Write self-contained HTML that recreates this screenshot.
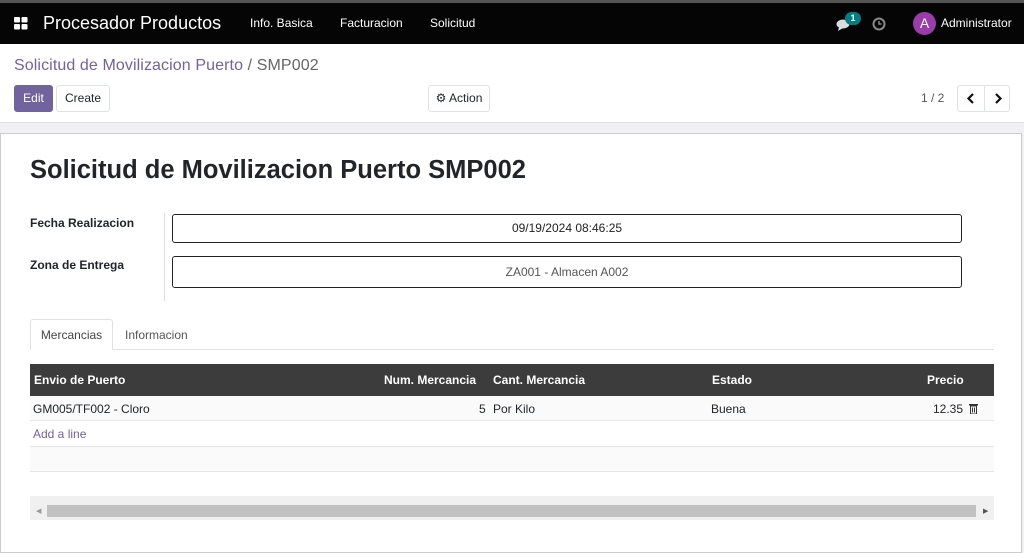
<!DOCTYPE html>
<html><head><meta charset="utf-8"><style>
*{box-sizing:border-box;margin:0;padding:0}
body{width:1024px;height:542px;overflow:hidden;font-family:"Liberation Sans",Arial,sans-serif;font-size:12px;color:#212529;background:#f1f1f3;position:relative}
.top{position:absolute;left:0;top:0;width:1024px;height:3px;background:#555}
.nav{position:absolute;left:0;top:3px;width:1024px;height:41px;background:#050505;color:#fff}
.nav span{position:absolute;top:13px;font-size:12px}
.cp{position:absolute;left:0;top:44px;width:1024px;height:79px;background:#fff;border-bottom:1px solid #dee2e6}
.btn{position:absolute;height:27px;border:1px solid #dee2e6;border-radius:3px;background:#fff;font-size:12px;line-height:25px;text-align:center}
.sheet{position:absolute;left:0;top:133px;width:1022px;height:420px;background:#fff;border:1px solid #ccc}
.lbl{position:absolute;font-weight:bold;font-size:12px}
.inp{position:absolute;left:172px;width:790px;border:1px solid #222;border-radius:3px;text-align:center;font-size:12px;color:#444}
.th{position:absolute;top:373px;color:#fff;font-weight:bold;font-size:12px}
.td{position:absolute;top:402px;font-size:12px}
</style></head><body>
<div class="top"></div>
<div class="nav">
 <svg style="position:absolute;left:14px;top:14px" width="14" height="13"><rect x="0" y="0" width="6" height="5.5" fill="#fff" rx="1"/><rect x="7.5" y="0" width="6" height="5.5" fill="#fff" rx="1"/><rect x="0" y="7" width="6" height="5.5" fill="#fff" rx="1"/><rect x="7.5" y="7" width="6" height="5.5" fill="#fff" rx="1"/></svg>
 <span style="left:43px;top:10px;font-size:18px">Procesador Productos</span>
 <span style="left:250px">Info. Basica</span>
 <span style="left:340px">Facturacion</span>
 <span style="left:430px">Solicitud</span>
 <svg style="position:absolute;left:836px;top:15px" width="16" height="13"><ellipse cx="7" cy="6" rx="6.5" ry="4.5" fill="#ddd"/><path d="M3 9 L2 13 L7 10Z" fill="#ddd"/></svg>
 <div style="position:absolute;left:845px;top:9px;width:16px;height:13px;border-radius:7px;background:#017e84;font-size:9px;font-weight:bold;text-align:center;line-height:13px">1</div>
 <svg style="position:absolute;left:872px;top:14px" width="14" height="14"><circle cx="7" cy="7" r="5.5" fill="none" stroke="#888" stroke-width="2"/><path d="M7 4V7H9.5" stroke="#888" stroke-width="1.5" fill="none"/></svg>
 <div style="position:absolute;left:913px;top:9px;width:23px;height:23px;border-radius:50%;background:#9b3cac;text-align:center;line-height:23px;font-size:14px">A</div>
 <span style="left:941px">Administrator</span>
</div>
<div class="cp">
 <div style="position:absolute;left:14px;top:13px;font-size:16px;color:#71639e;letter-spacing:0.1px">Solicitud de Movilizacion Puerto<span style="color:#666"> / SMP002</span></div>
 <div class="btn" style="left:14px;top:41px;width:39px;background:#71639e;color:#fff;border-color:#71639e">Edit</div>
 <div class="btn" style="left:56px;top:41px;width:54px">Create</div>
 <div class="btn" style="left:428px;top:41px;width:62px">&#9881; Action</div>
 <div style="position:absolute;left:921px;top:47px;color:#555;font-size:12px">1 / 2</div>
 <div class="btn" style="left:957px;top:41px;width:53px">
  <svg style="position:absolute;left:0;top:0" width="26" height="25"><path d="M15 8L10.5 12.5L15 17" stroke="#111" stroke-width="2.2" fill="none"/></svg>
  <div style="position:absolute;left:26px;top:0;width:1px;height:25px;background:#dee2e6"></div>
  <svg style="position:absolute;left:27px;top:0" width="26" height="25"><path d="M11 8L15.5 12.5L11 17" stroke="#111" stroke-width="2.2" fill="none"/></svg>
 </div>
</div>
<div class="sheet"></div>
<div style="position:absolute;left:30px;top:156px;font-size:25.5px;font-weight:bold;color:#212529">Solicitud de Movilizacion Puerto SMP002</div>
<div class="lbl" style="left:30px;top:216px">Fecha Realizacion</div>
<div class="lbl" style="left:30px;top:258px">Zona de Entrega</div>
<div style="position:absolute;left:164px;top:213px;width:1px;height:88px;background:#ddd"></div>
<div class="inp" style="top:214px;height:29px;line-height:27px;color:#222">09/19/2024 08:46:25</div>
<div class="inp" style="top:256px;height:32px;line-height:30px;color:#555">ZA001 - Almacen A002</div>
<div style="position:absolute;left:30px;top:349px;width:964px;height:1px;background:#dee2e6"></div>
<div style="position:absolute;left:30px;top:319px;width:83px;height:31px;border:1px solid #dee2e6;border-bottom:none;background:#fff;border-radius:3px 3px 0 0;text-align:center;line-height:30px;color:#444">Mercancias</div>
<div style="position:absolute;left:125px;top:328px;color:#555">Informacion</div>
<div style="position:absolute;left:30px;top:364px;width:964px;height:32px;background:#3c3c3c"></div>
<div class="th" style="left:34px">Envio de Puerto</div>
<div class="th" style="left:384px">Num. Mercancia</div>
<div class="th" style="left:493px">Cant. Mercancia</div>
<div class="th" style="left:712px">Estado</div>
<div class="th" style="left:927px">Precio</div>
<div style="position:absolute;left:30px;top:396px;width:964px;height:25px;background:#fafafa;border-bottom:1px solid #e6e6e6"></div>
<div class="td" style="left:33px">GM005/TF002 - Cloro</div>
<div class="td" style="left:479px">5</div>
<div class="td" style="left:493px">Por Kilo</div>
<div class="td" style="left:711px">Buena</div>
<div class="td" style="left:933px">12.35</div>
<svg style="position:absolute;left:969px;top:403px" width="9" height="11"><rect x="0" y="1" width="9" height="1.5" fill="#333"/><rect x="1.5" y="3" width="6" height="8" fill="none" stroke="#333"/><path d="M3.5 4.5V9.5M5.5 4.5V9.5" stroke="#333"/></svg>
<div style="position:absolute;left:33px;top:427px;color:#71639e">Add a line</div>
<div style="position:absolute;left:30px;top:446px;width:964px;height:26px;background:#fafafa;border-top:1px solid #e6e6e6;border-bottom:1px solid #e6e6e6"></div>
<div style="position:absolute;left:30px;top:496px;width:964px;height:24px;background:#f0f0f0"></div>
<div style="position:absolute;left:47px;top:505px;width:929px;height:12px;background:#c1c1c1"></div>
<div style="position:absolute;left:36px;top:507px;font-size:7px;color:#999">&#9664;</div>
<div style="position:absolute;left:983px;top:507px;font-size:7px;color:#555">&#9654;</div>
</body></html>
